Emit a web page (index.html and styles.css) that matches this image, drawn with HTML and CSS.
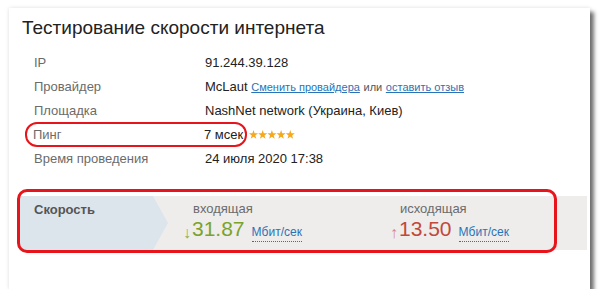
FILE: index.html
```html
<!DOCTYPE html>
<html lang="ru">
<head>
    <meta charset="UTF-8">
    <title>Тестирование скорости интернета</title>
    <link rel="stylesheet" href="styles.css">
</head>
<body>
    <div class="card">
        <h1 class="title">Тестирование скорости интернета</h1>

        <div class="info">
            <div class="row">
                <span class="label">IP</span>
                <span class="value">91.244.39.128</span>
            </div>
            <div class="row">
                <span class="label">Провайдер</span>
                <span class="value">McLaut <a href="#" class="link">Сменить провайдера</a> <span class="muted">или</span> <a href="#" class="link">оставить отзыв</a></span>
            </div>
            <div class="row">
                <span class="label">Площадка</span>
                <span class="value">NashNet network (Украина, Киев)</span>
            </div>
            <div class="row">
                <span class="mark">
                    <span class="label">Пинг</span>
                    <span class="value">7 мсек</span>
                </span>
                <svg class="stars" width="46" height="9" viewBox="0 0 46 9">
                    <polygon points="4.5,0 5.6,3.2 9,3.3 6.3,5.4 7.3,8.8 4.5,6.8 1.7,8.8 2.7,5.4 0,3.3 3.4,3.2"/>
                    <polygon transform="translate(9.2 0)" points="4.5,0 5.6,3.2 9,3.3 6.3,5.4 7.3,8.8 4.5,6.8 1.7,8.8 2.7,5.4 0,3.3 3.4,3.2"/>
                    <polygon transform="translate(18.4 0)" points="4.5,0 5.6,3.2 9,3.3 6.3,5.4 7.3,8.8 4.5,6.8 1.7,8.8 2.7,5.4 0,3.3 3.4,3.2"/>
                    <polygon transform="translate(27.6 0)" points="4.5,0 5.6,3.2 9,3.3 6.3,5.4 7.3,8.8 4.5,6.8 1.7,8.8 2.7,5.4 0,3.3 3.4,3.2"/>
                    <polygon transform="translate(36.8 0)" points="4.5,0 5.6,3.2 9,3.3 6.3,5.4 7.3,8.8 4.5,6.8 1.7,8.8 2.7,5.4 0,3.3 3.4,3.2"/>
                </svg>
            </div>
            <div class="row">
                <span class="label">Время проведения</span>
                <span class="value">24 июля 2020 17:38</span>
            </div>
        </div>

        <div class="speed">
            <div class="speed-head">Скорость</div>
            <div class="speed-col">
                <div class="speed-name">входящая</div>
                <div class="speed-line">
                    <span class="arrow arrow-down">↓</span><span class="num num-down">31.87</span>
                    <span class="unit">Мбит/сек</span>
                </div>
            </div>
            <div class="speed-col">
                <div class="speed-name">исходящая</div>
                <div class="speed-line">
                    <span class="arrow arrow-up">↑</span><span class="num num-up">13.50</span>
                    <span class="unit">Мбит/сек</span>
                </div>
            </div>
            <div class="speed-outline"></div>
        </div>
    </div>
</body>
</html>
```

FILE: styles.css
```css
body {
    margin: 0;
    background: #fff;
    font-family: "Liberation Sans", Arial, sans-serif;
    color: #222;
}
.card {
    margin: 8px 0 0 9px;
    width: 581px;
    height: 281px;
    background: #fff;
    box-shadow: 4px 4px 4px rgba(0,0,0,0.55), 0 0 4px rgba(0,0,0,0.12);
    overflow: hidden;
}
.title {
    margin: 0;
    padding: 9px 0 0 13px;
    font-size: 19px;
    line-height: 22px;
    font-weight: normal;
    color: #222;
}
.info {
    margin-top: 11px;
    padding-left: 16px;
}
.row {
    display: flex;
    align-items: center;
    height: 24px;
    padding-left: 9px;
    font-size: 13px;
}
.label {
    width: 171px;
    flex: none;
    color: #6b6b6b;
}
.value {
    color: #222;
}
.link {
    font-size: 11px;
    color: #2a73b8;
}
.muted {
    font-size: 11px;
    color: #555;
}
.mark {
    display: flex;
    align-items: center;
    box-sizing: border-box;
    width: 222px;
    height: 25px;
    margin-left: -9px;
    padding-left: 6px;
    border: 2.5px solid #e8141b;
    border-radius: 12px;
}
.stars {
    margin-left: 2px;
    fill: #f5a81c;
}
.speed {
    position: relative;
    display: flex;
    height: 54px;
    margin: 26px 3px 0 11px;
    background: #eeedeb;
}
.speed-head {
    flex: none;
    box-sizing: border-box;
    width: 148px;
    padding: 6px 0 0 14px;
    background: #dde5ec;
    clip-path: polygon(0 0, 133px 0, 148px 50%, 133px 100%, 0 100%);
    font-size: 13px;
    font-weight: bold;
    color: #555;
}
.speed-col {
    width: 207px;
    flex: none;
    padding-top: 6px;
}
.speed-head + .speed-col {
    margin-left: 15px;
}
.speed-name {
    padding-left: 10px;
    font-size: 13px;
    line-height: 14px;
    color: #6b6b6b;
}
.speed-line {
    display: flex;
    align-items: baseline;
    margin-top: 1px;
}
.arrow {
    font-size: 16px;
    margin-right: 1px;
    position: relative;
    top: 2px;
}
.arrow-down {
    color: #8cb443;
}
.arrow-up {
    color: #d48592;
}
.num {
    font-size: 21px;
    line-height: 24px;
}
.num-down {
    color: #7ca329;
}
.num-up {
    color: #c2483a;
}
.unit {
    margin-left: 7px;
    font-size: 12px;
    color: #2a73b8;
    padding-bottom: 2px;
    border-bottom: 1px dotted #2a73b8;
}
.speed-outline {
    position: absolute;
    left: -3px;
    top: -7px;
    width: 540px;
    height: 64px;
    box-sizing: border-box;
    border: 3px solid #e8141b;
    border-radius: 10px;
}
```
